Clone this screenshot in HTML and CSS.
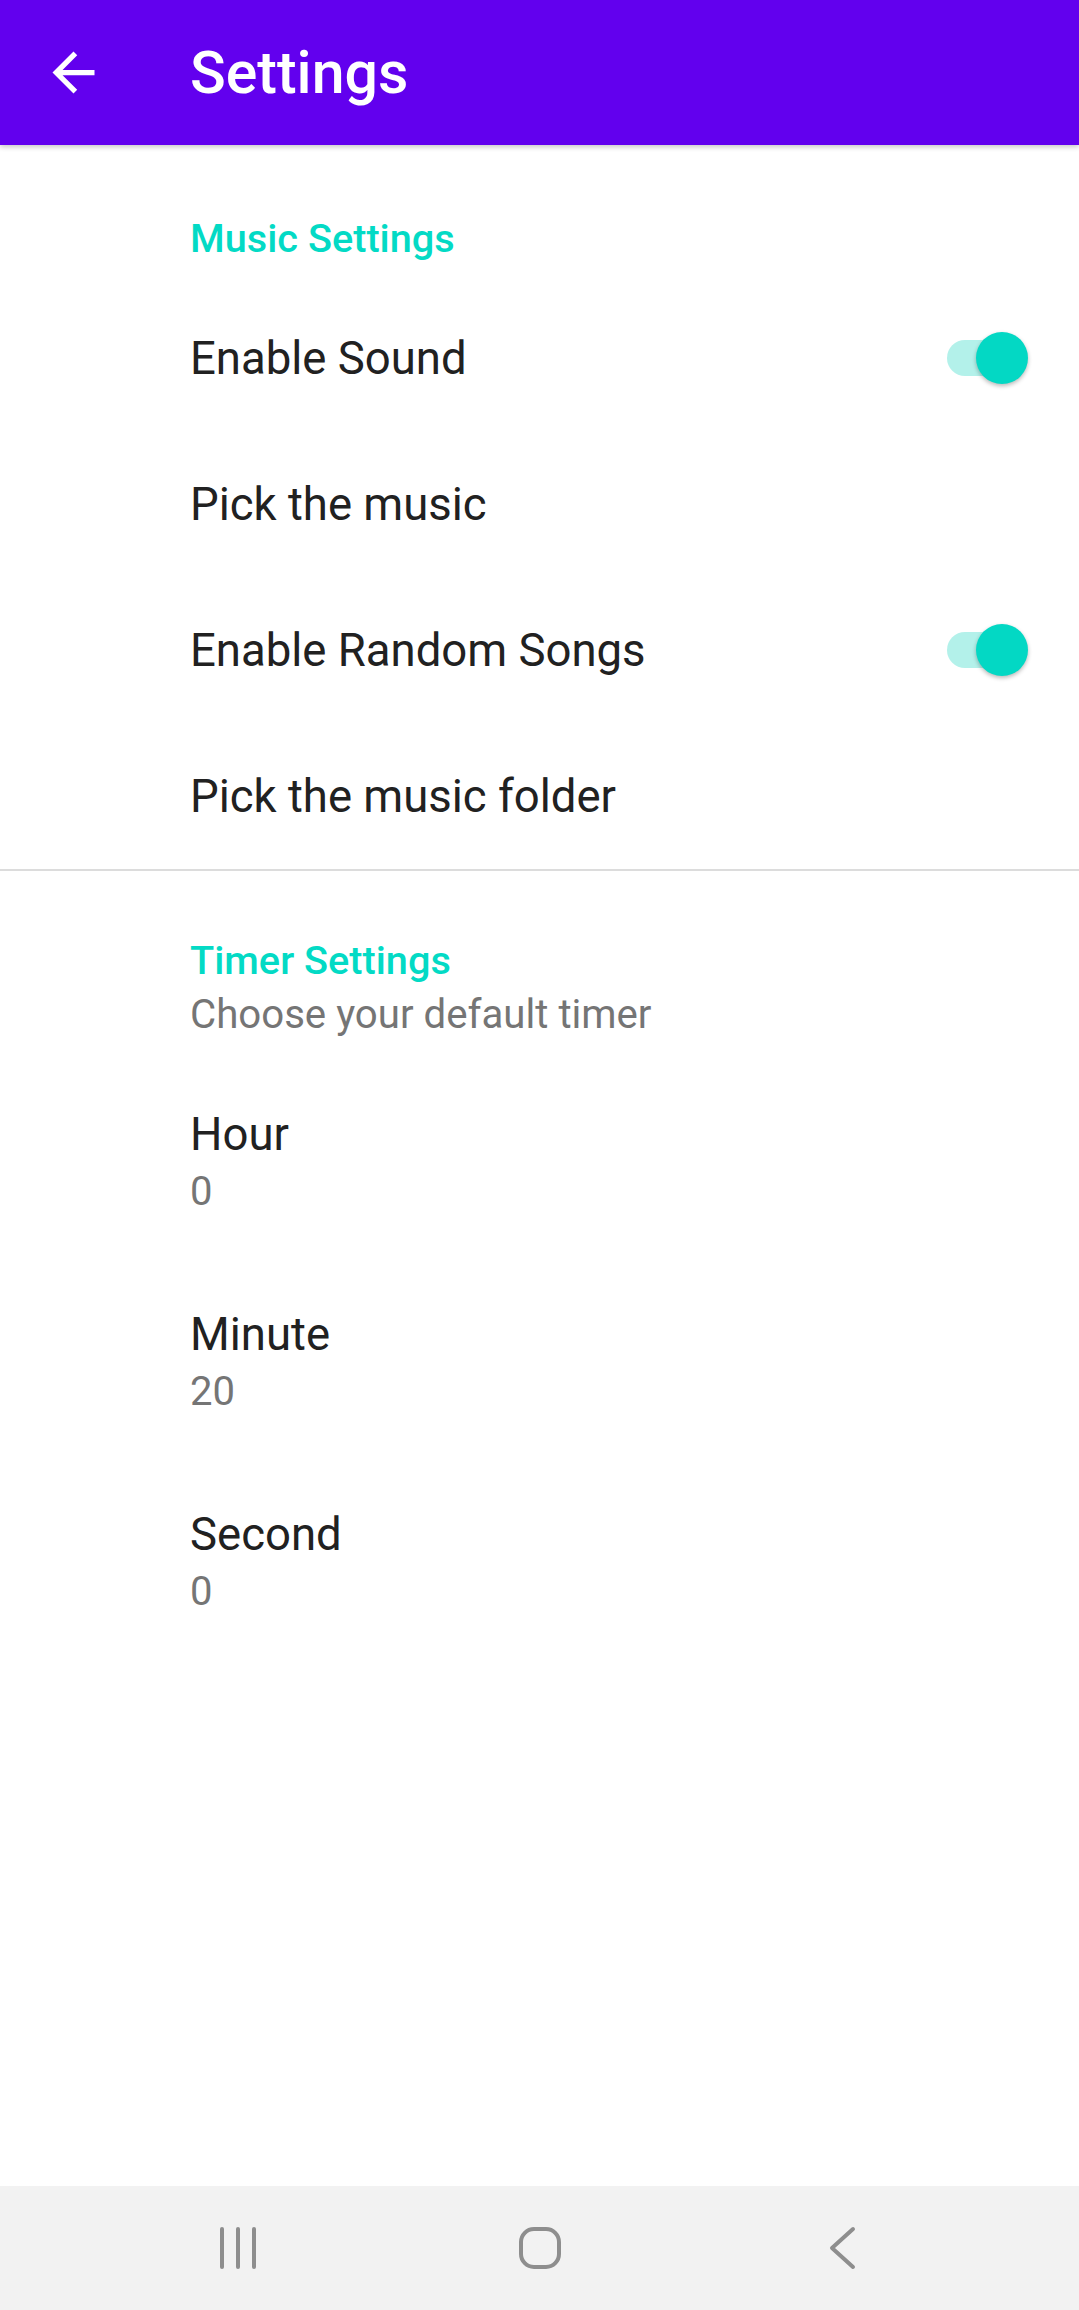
FILE: index.html
```html
<!DOCTYPE html>
<html lang="en">
<head>
<meta charset="utf-8">
<title>Settings</title>
<link rel="stylesheet" href="styles.css">
</head>
<body>
<div class="screen">
  <header class="appbar">
    <svg class="back-icon" viewBox="0 0 24 24" aria-hidden="true"><path d="M20 11H7.83l5.59-5.59L12 4l-8 8 8 8 1.41-1.41L7.83 13H20v-2z" fill="#ffffff"/></svg>
    <h1 class="appbar-title">Settings</h1>
  </header>

  <main class="content">
    <section class="group">
      <div class="category category-music">
        <div class="category-title">Music Settings</div>
      </div>
      <div class="pref">
        <div class="pref-title">Enable Sound</div>
        <div class="switch"><span class="switch-track"></span><span class="switch-thumb"></span></div>
      </div>
      <div class="pref">
        <div class="pref-title">Pick the music</div>
      </div>
      <div class="pref">
        <div class="pref-title">Enable Random Songs</div>
        <div class="switch"><span class="switch-track"></span><span class="switch-thumb"></span></div>
      </div>
      <div class="pref">
        <div class="pref-title">Pick the music folder</div>
      </div>
    </section>

    <hr class="divider">

    <section class="group">
      <div class="category category-timer">
        <div class="category-title">Timer Settings</div>
        <div class="category-summary">Choose your default timer</div>
      </div>
      <div class="pref pref-two">
        <div class="pref-title">Hour</div>
        <div class="pref-summary">0</div>
      </div>
      <div class="pref pref-two">
        <div class="pref-title">Minute</div>
        <div class="pref-summary">20</div>
      </div>
      <div class="pref pref-two">
        <div class="pref-title">Second</div>
        <div class="pref-summary">0</div>
      </div>
    </section>
  </main>

  <nav class="navbar">
    <div class="nav-cell">
      <svg class="nav-icon" viewBox="0 0 60 60" aria-hidden="true"><g stroke="#8e8e8e" stroke-width="4" stroke-linecap="round"><line x1="14" y1="11" x2="14" y2="49"/><line x1="30" y1="11" x2="30" y2="49"/><line x1="46" y1="11" x2="46" y2="49"/></g></svg>
    </div>
    <div class="nav-cell">
      <svg class="nav-icon" viewBox="0 0 60 60" aria-hidden="true"><rect x="11" y="11" width="38" height="38" rx="13" ry="13" fill="none" stroke="#8e8e8e" stroke-width="4"/></svg>
    </div>
    <div class="nav-cell">
      <svg class="nav-icon" viewBox="0 0 60 60" aria-hidden="true"><polyline points="41,11 20,30 41,49" fill="none" stroke="#8e8e8e" stroke-width="4" stroke-linecap="round" stroke-linejoin="round"/></svg>
    </div>
  </nav>
</div>
</body>
</html>
```

FILE: styles.css
```css
html, body {
  margin: 0;
  padding: 0;
  background: #ffffff;
}

body {
  font-family: Roboto, "Liberation Sans", sans-serif;
  color: #212121;
}

.screen {
  display: flex;
  flex-direction: column;
  min-height: 2310px;
  width: 1079px;
}

.appbar {
  height: 145px;
  flex: 0 0 145px;
  background: #6200ee;
  display: flex;
  align-items: center;
  box-shadow: 0 2px 5px rgba(0, 0, 0, 0.22);
  position: relative;
  z-index: 2;
}

.back-icon {
  width: 63px;
  height: 63px;
  margin-left: 42px;
  flex: 0 0 63px;
}

.appbar-title {
  margin: 0 0 0 85px;
  font-size: 59px;
  font-weight: 500;
  line-height: 1;
  color: #ffffff;
  letter-spacing: 0;
}

.content {
  flex: 1 1 auto;
}

.category {
  padding-left: 190px;
}

.category-music {
  padding-top: 70px;
  padding-bottom: 23px;
}

.category-timer {
  padding-top: 66px;
  padding-bottom: 25px;
}

.category-title {
  font-size: 39.7px;
  font-weight: 500;
  line-height: 47px;
  color: #03dac5;
}

.category-summary {
  margin-top: 7px;
  font-size: 40.2px;
  line-height: 47px;
  color: #757575;
}

.pref {
  display: flex;
  align-items: center;
  justify-content: space-between;
  height: 146px;
  padding: 0 51px 0 190px;
  box-sizing: border-box;
}

.pref-two {
  height: 200px;
  flex-direction: column;
  align-items: flex-start;
  justify-content: center;
}

.pref-title {
  font-size: 45.5px;
  line-height: 57px;
  color: #212121;
}

.pref-summary {
  font-size: 40px;
  line-height: 57px;
  color: #757575;
}

.switch {
  position: relative;
  width: 81px;
  height: 52px;
  flex: 0 0 81px;
}

.switch-track {
  position: absolute;
  left: 0;
  top: 8px;
  width: 70px;
  height: 36px;
  border-radius: 18px;
  background: #b3f1ea;
}

.switch-thumb {
  position: absolute;
  left: 29px;
  top: 0;
  width: 52px;
  height: 52px;
  border-radius: 50%;
  background: #03d8c4;
  box-shadow: 0 2px 4px rgba(0, 0, 0, 0.28);
}

.divider {
  margin: 0;
  border: 0;
  height: 2px;
  background: #dcdcdc;
}

.navbar {
  flex: 0 0 124px;
  height: 124px;
  background: #f2f2f2;
  display: flex;
  justify-content: center;
  align-items: center;
}

.nav-cell {
  width: 302px;
  display: flex;
  justify-content: center;
  align-items: center;
}

.nav-icon {
  width: 60px;
  height: 60px;
  display: block;
}
```
